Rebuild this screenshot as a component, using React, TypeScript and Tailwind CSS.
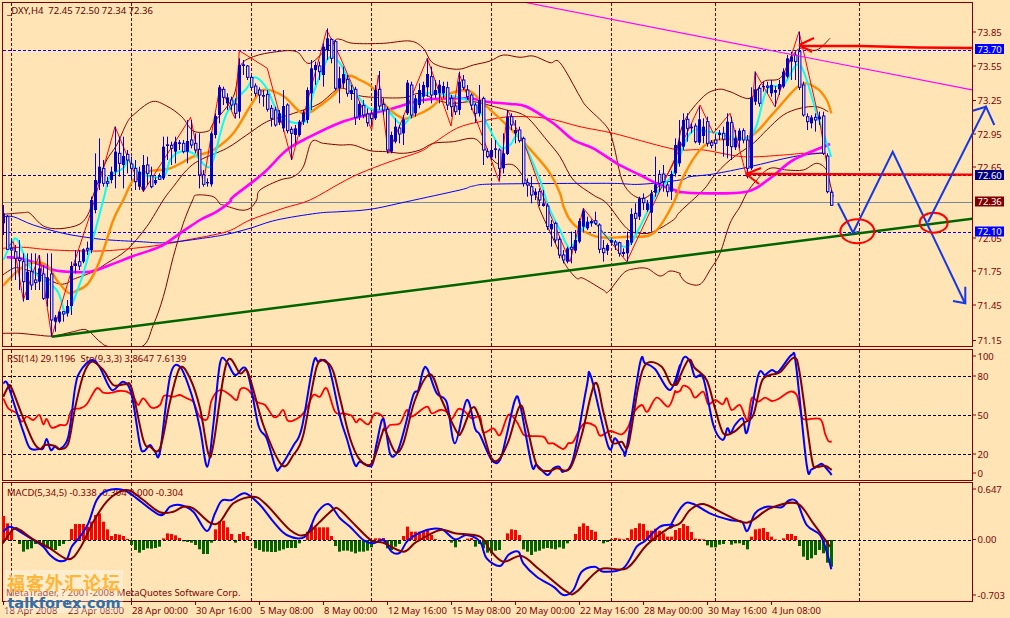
import React from "react";

type Seg = [number, number, number[]];
const MAROON = "#800000";
const BLUE = "#0000ff";
const RED = "#ff0000";

const nums = (segs: Seg[]) => {
  const out: [number, number][] = [];
  segs.forEach(([ox, oy, a]) => {
    for (let i = 0; i < a.length; i += 2) out.push([ox + a[i] / 3, oy + a[i + 1] / 3]);
  });
  return out;
};
const smoothPath = (p: [number, number][]) => {
  let d = `M${p[0][0].toFixed(1)},${p[0][1].toFixed(1)}`;
  for (let i = 0; i < p.length - 1; i++) {
    const a = p[Math.max(0, i - 1)];
    const b = p[i];
    const c = p[i + 1];
    const e = p[Math.min(p.length - 1, i + 2)];
    const c1 = [b[0] + (c[0] - a[0]) / 6, b[1] + (c[1] - a[1]) / 6];
    const c2 = [c[0] - (e[0] - b[0]) / 6, c[1] - (e[1] - b[1]) / 6];
    d += `C${c1[0].toFixed(1)},${c1[1].toFixed(1)} ${c2[0].toFixed(1)},${c2[1].toFixed(1)} ${c[0].toFixed(1)},${c[1].toFixed(1)}`;
  }
  return d;
};

const L = ({ s, c, w = 1, sharp = false }: { s: Seg[]; c: string; w?: number; sharp?: boolean }) =>
  sharp ? (
    <polyline points={nums(s).map((q) => q.map((v) => v.toFixed(1)).join(",")).join(" ")} fill="none" stroke={c} strokeWidth={w} strokeLinejoin="round" />
  ) : (
    <path d={smoothPath(nums(s))} fill="none" stroke={c} strokeWidth={w} strokeLinejoin="round" />
  );

const upper: Seg[] = [
  [0, 200, [8, 42, 20, 42, 70, 38, 90, 40, 130, 78, 180, 86, 240, 72, 268, 35, 275, 0]],
  [0, 0, [300, 530, 320, 480, 350, 435, 380, 370, 400, 345, 455, 305, 500, 318, 545, 350, 580, 393, 625, 393, 640, 370, 700, 290, 720, 200, 760, 170, 830, 155, 890, 155, 930, 190, 1000, 125]],
  [340, 0, [0, 118, 40, 130, 130, 130, 210, 123, 250, 145, 280, 190, 350, 208, 400, 195, 450, 183, 490, 165, 540, 172, 580, 168, 630, 188, 660, 188, 720, 290, 740, 320, 800, 380, 820, 430, 850, 550, 900, 595]],
  [640, 0, [45, 570, 100, 490]],
  [670, 0, [40, 370, 100, 290, 145, 268, 180, 275, 240, 295, 280, 245, 330, 235, 360, 180, 390, 145, 440, 150, 480, 115]],
];
const mid: Seg[] = [
  [0, 200, [8, 225, 40, 205, 60, 205, 110, 220, 170, 250, 200, 250, 220, 238, 280, 215, 320, 190, 380, 150, 440, 80, 490, 0]],
  [0, 0, [520, 560, 560, 510, 600, 480, 680, 445, 740, 405, 800, 365, 850, 350, 910, 330, 960, 310, 1020, 265]],
  [340, 0, [50, 285, 100, 292, 190, 293, 240, 280, 290, 300, 340, 310, 400, 305, 470, 322, 500, 330, 540, 340, 570, 360, 620, 420, 660, 470, 700, 540, 760, 585, 800, 610]],
  [340, 190, [860, 115, 900, 130, 940, 125, 1000, 90, 1020, 65]],
  [670, 0, [100, 570, 130, 530, 180, 480, 250, 430, 290, 390, 340, 345, 390, 325, 440, 320, 475, 335]],
];
const lower: Seg[] = [
  [0, 200, [8, 400, 60, 400, 110, 405, 160, 408, 220, 395, 260, 390, 300, 425, 330, 440, 425, 440, 460, 375, 490, 290, 520, 170, 550, 70, 578, 0]],
  [0, 0, [590, 585, 640, 590, 660, 612]],
  [0, 200, [670, 15, 720, 30, 750, 25, 770, 0]],
  [0, 0, [780, 570, 840, 540, 880, 530, 910, 500, 935, 425, 970, 430, 1020, 435]],
  [340, 0, [40, 435, 90, 452, 140, 455, 190, 460, 240, 450, 280, 430, 340, 425, 400, 415, 430, 440, 470, 490, 520, 495, 550, 530, 590, 590]],
  [340, 190, [600, 60, 660, 190, 680, 230, 710, 265, 730, 265, 790, 300, 805, 305, 850, 250, 880, 237, 920, 235, 960, 258, 990, 243, 1020, 250]],
  [670, 190, [30, 255, 50, 278, 90, 283, 120, 240, 150, 190, 180, 100, 210, 50]],
  [670, 0, [230, 580, 260, 540, 300, 505, 350, 510, 400, 510, 440, 490, 470, 510, 480, 550, 490, 590]],
];
const redMa: Seg[] = [
  [0, 200, [8, 145, 70, 142, 160, 150, 300, 153, 400, 145, 480, 135, 560, 120, 680, 95, 750, 60, 850, 25, 930, 0]],
  [0, 0, [1020, 550]],
  [340, 0, [60, 520, 150, 485, 240, 455, 280, 430, 350, 385, 420, 365, 510, 350, 620, 355, 720, 380, 820, 400, 950, 435, 1020, 450]],
  [670, 0, [100, 450, 220, 470, 340, 465, 400, 460, 465, 460]],
];
const blueMa: Seg[] = [
  [0, 200, [8, 50, 40, 50, 100, 75, 190, 100, 280, 115, 330, 120, 420, 125, 500, 128, 620, 113, 680, 103, 750, 85, 830, 60, 950, 40, 1020, 35]],
  [340, 190, [90, 58, 200, 35, 360, 0]],
  [340, 0, [400, 558, 470, 552, 800, 550, 900, 553, 1020, 540]],
  [670, 0, [60, 530, 130, 522, 240, 500, 370, 470, 465, 458]],
];
const magenta: Seg[] = [
  [0, 200, [20, 172, 60, 175, 110, 190, 160, 210, 200, 215, 270, 215, 330, 195, 400, 168, 480, 140, 540, 100, 600, 60, 650, 35, 690, 5]],
  [0, 0, [700, 590, 790, 520, 860, 450, 930, 410, 1020, 368]],
  [340, 0, [80, 345, 160, 325, 250, 300, 380, 295, 440, 305, 510, 312, 560, 320, 640, 370, 700, 420, 760, 445, 830, 490, 900, 525, 960, 555, 1020, 575]],
  [670, 0, [20, 575, 90, 580, 230, 575, 300, 535, 370, 480, 480, 432]],
];
const orange: Seg[] = [
  [0, 200, [8, 258, 50, 215, 90, 190, 140, 195, 170, 240, 205, 278, 230, 272, 265, 250, 300, 180, 340, 60, 370, 0]],
  [0, 0, [400, 540, 440, 515, 510, 505, 580, 470, 640, 450, 700, 400, 750, 320, 790, 270, 850, 288, 910, 340, 970, 310, 1020, 265]],
  [340, 0, [25, 228, 60, 240, 100, 265, 140, 320, 190, 355, 230, 345, 270, 325, 320, 285, 385, 272, 430, 310, 500, 375, 540, 415, 590, 470, 630, 520, 660, 580, 670, 618]],
  [340, 190, [690, 90, 720, 118, 780, 142, 860, 140, 940, 130, 1000, 40]],
  [670, 0, [40, 530, 90, 450, 140, 420, 240, 410, 310, 340, 390, 255, 440, 265, 470, 300, 484, 340]],
];
const cyan: Seg[] = [
  [0, 200, [10, 180, 45, 115, 70, 160, 100, 215, 170, 270, 200, 340, 240, 250, 270, 150, 310, 0]],
  [0, 0, [330, 530, 370, 505, 385, 480, 420, 520, 490, 530, 510, 480, 540, 455, 580, 460, 620, 500, 640, 480, 680, 340, 740, 265, 765, 232, 800, 265, 830, 330, 870, 365, 920, 360, 940, 280, 985, 175, 1020, 190]],
  [340, 0, [30, 250, 70, 310, 100, 330, 140, 330, 190, 375, 230, 310, 260, 280, 320, 285, 380, 300, 410, 320, 440, 370, 480, 440, 510, 435, 540, 410, 600, 540, 625, 618]],
  [340, 190, [660, 120, 690, 175, 720, 125, 760, 95, 800, 140, 860, 170, 900, 110, 950, 10]],
  [670, 0, [10, 520, 60, 400, 120, 395, 240, 410, 290, 270, 340, 255, 390, 195, 440, 340, 484, 470]],
];
const zigzag: Seg[] = [
  [0, 200, [18, 145, 40, 125, 70, 300, 118, 165, 155, 410, 215, 210, 275, 30]],
  [0, 0, [345, 380, 395, 500, 430, 575, 572, 352, 610, 550, 640, 370, 660, 260, 705, 355, 718, 152, 802, 205, 875, 480, 980, 90]],
  [340, 0, [0, 170, 95, 390, 115, 225, 145, 460, 262, 175, 333, 378, 357, 220, 478, 545, 503, 330, 560, 450, 620, 618]],
  [340, 190, [690, 215, 730, 55, 860, 215]],
  [670, 0, [90, 315, 130, 400, 180, 340, 230, 530, 255, 215, 315, 320, 387, 95, 450, 370, 470, 490]],
];

// candle: [bodyTop, bodyBottom, filled, wickTop?, wickBottom?] in zoomed units
type C = [number, number, number, number?, number?];
type Sec = { oy: number; x: number; d: C[] };
const secs: Sec[] = [
  { oy: 200, x: 3, d: [[40, 70, 1, 15, 105], [50, 148, 0, 45, 150], [145, 150, 0, 120, 235], [155, 175, 0, 135, 240], [175, 182, 0, 120, 270], [185, 245, 0, 160, 305], [215, 300, 1, 160, 300], [215, 255, 0, 160, 270], [240, 248, 0, 160, 270], [205, 245, 1, 165, 270], [222, 295, 0, 195, 300], [232, 295, 1, 160, 320], [222, 360, 0, 160, 410], [352, 365, 1, 345, 395], [335, 365, 1, 335, 370], [335, 342, 0, 335, 365], [318, 340, 1, 300, 350], [198, 318, 1, 185, 345], [190, 198, 1, 150, 220], [185, 198, 0, 150, 210], [148, 185, 1, 145, 190], [145, 150, 0, 125, 165], [0, 150, 1, -10, 160]] },
  { oy: 0, x: 95, d: [[540, 630, 1, 460, 640], [500, 550, 1, 415, 570], [505, 550, 0, 480, 560], [545, 550, 0, 530, 560], [515, 540, 1, 500, 550], [455, 515, 1, 380, 565], [460, 490, 0, 410, 530], [468, 495, 1, 410, 565], [463, 480, 0, 450, 520], [492, 505, 0, 470, 540], [505, 545, 0, 480, 570], [515, 560, 1, 500, 570], [495, 570, 1, 465, 575], [495, 520, 0, 470, 555], [527, 560, 0, 500, 565], [540, 550, 1, 530, 555], [530, 538, 0, 520, 540], [440, 535, 1, 410, 540], [433, 438, 1, 410, 480], [436, 445, 0, 425, 495], [425, 455, 1, 410, 490], [427, 432, 1, 420, 450], [430, 455, 0, 420, 460], [423, 455, 1, 360, 490], [420, 435, 0, 360, 445], [430, 450, 0, 400, 460], [448, 525, 0, 400, 565], [525, 553, 0, 510, 560], [546, 550, 1, 535, 560], [400, 553, 1, 395, 560], [348, 405, 1, 340, 415], [262, 345, 1, 255, 370], [268, 292, 0, 260, 315], [292, 310, 1, 280, 330], [300, 315, 0, 290, 330], [312, 340, 0, 295, 355], [195, 335, 1, 175, 355], [193, 198, 1, 180, 225], [198, 232, 0, 195, 240], [232, 262, 0, 225, 270], [258, 280, 0, 250, 290], [270, 285, 0, 262, 310], [285, 290, 1, 270, 320], [283, 328, 0, 270, 335], [325, 355, 0, 315, 380], [330, 375, 0, 320, 380], [340, 368, 1, 330, 375], [318, 385, 1, 270, 395], [315, 392, 0, 310, 400], [388, 400, 0, 380, 480], [385, 405, 1, 375, 430], [365, 405, 1, 360, 410], [338, 365, 1, 330, 375], [270, 360, 1, 262, 370], [205, 280, 1, 180, 330], [195, 210, 1, 185, 255], [198, 215, 0, 185, 240], [140, 225, 1, 130, 260], [115, 150, 1, 85, 180], [118, 175, 0, 115, 190], [125, 265, 0, 120, 270], [235, 265, 1, 200, 310]] },
  { oy: 0, x: 343, d: [[222, 250, 1, 200, 265], [238, 280, 0, 225, 290], [270, 282, 1, 255, 300], [268, 352, 0, 260, 375], [312, 350, 1, 305, 360], [316, 345, 0, 300, 355], [342, 368, 0, 325, 380], [342, 356, 0, 330, 380], [270, 355, 1, 255, 360], [268, 318, 0, 213, 330], [313, 330, 0, 295, 345], [328, 450, 0, 320, 460], [405, 455, 1, 395, 460], [380, 425, 1, 355, 430], [384, 402, 0, 375, 430], [358, 400, 1, 345, 435], [248, 340, 1, 240, 345], [255, 345, 0, 245, 355], [295, 340, 1, 285, 350], [270, 315, 1, 250, 325], [255, 290, 1, 245, 310], [222, 262, 1, 175, 290], [230, 285, 0, 200, 310], [270, 285, 1, 240, 295], [254, 280, 1, 240, 310], [258, 280, 1, 245, 295], [263, 315, 0, 245, 330], [295, 320, 0, 285, 350], [318, 335, 0, 305, 345], [245, 330, 1, 215, 345], [240, 262, 0, 225, 270], [270, 290, 0, 255, 300], [285, 315, 0, 280, 330], [315, 340, 0, 308, 368], [300, 340, 1, 255, 350], [295, 450, 0, 290, 495], [455, 470, 0, 445, 475], [450, 472, 1, 420, 480], [445, 450, 1, 420, 475], [450, 505, 0, 445, 540], [460, 505, 1, 400, 520], [350, 462, 1, 330, 465], [350, 375, 0, 340, 390], [390, 400, 1, 360, 430], [390, 422, 0, 380, 428], [415, 550, 0, 410, 560], [548, 555, 0, 535, 590], [560, 585, 0, 530, 610], [575, 585, 1, 565, 600], [575, 600, 0, 565, 618]] },
  { oy: 190, x: 543, d: [[40, 48, 1, 0, 50], [48, 110, 0, 40, 120], [102, 118, 1, 90, 170], [100, 150, 0, 95, 160], [148, 195, 0, 140, 205], [195, 210, 0, 180, 220], [175, 215, 1, 170, 220], [172, 178, 0, 125, 220], [150, 182, 1, 120, 190], [93, 155, 1, 85, 160], [62, 110, 1, 55, 125], [95, 115, 1, 80, 120], [93, 100, 1, 88, 110], [92, 100, 0, 65, 105], [105, 178, 0, 100, 190], [175, 188, 0, 150, 215], [165, 182, 1, 160, 195], [150, 158, 1, 145, 165], [156, 165, 0, 150, 180], [158, 190, 0, 155, 200], [186, 192, 1, 175, 200], [150, 190, 1, 125, 215], [72, 158, 1, 55, 165], [70, 85, 0, 40, 130], [25, 80, 1, 20, 90], [25, 38, 0, 10, 60], [40, 60, 1, 30, 65], [10, 68, 1, 0, 125]] },
  { oy: 0, x: 655, d: [[553, 578, 1, 470, 590], [523, 550, 0, 510, 575], [522, 545, 0, 495, 575], [555, 575, 0, 545, 590], [522, 575, 1, 512, 600], [435, 520, 1, 415, 530], [425, 490, 1, 360, 500], [360, 440, 1, 340, 450], [358, 385, 0, 340, 425], [380, 385, 1, 370, 400], [378, 425, 0, 370, 430], [358, 428, 1, 320, 435], [380, 408, 1, 355, 430], [365, 430, 0, 350, 440], [428, 436, 0, 420, 445], [420, 430, 0, 405, 445], [398, 405, 1, 390, 420], [400, 418, 0, 380, 470], [365, 438, 1, 340, 475], [368, 440, 0, 350, 480], [415, 442, 1, 390, 450], [392, 422, 1, 385, 445], [392, 420, 0, 385, 430], [420, 505, 0, 405, 535], [292, 505, 1, 262, 510], [268, 305, 1, 215, 315], [265, 310, 0, 255, 320], [258, 262, 1, 245, 275], [258, 262, 0, 245, 280], [255, 280, 1, 240, 290], [270, 278, 1, 258, 320], [252, 268, 1, 240, 285], [215, 260, 1, 205, 265], [175, 230, 1, 165, 235], [170, 185, 1, 155, 240], [165, 185, 0, 155, 240], [155, 262, 0, 95, 270], [255, 345, 0, 245, 350], [350, 365, 0, 340, 390], [352, 370, 1, 345, 385], [352, 360, 0, 340, 395], [350, 358, 1, 335, 375], [348, 460, 0, 335, 465], [468, 575, 0, 460, 580], [577, 616, 0, 570, 618]] },
];

const Candles = () => {
  const out: React.ReactNode[] = [];
  secs.forEach((s, si) =>
    s.d.forEach((c, i) => {
      const x = s.x + i * 4;
      const t = s.oy + c[0] / 3;
      const b = s.oy + c[1] / 3;
      const wt = s.oy + (c[3] ?? c[0]) / 3;
      const wb = s.oy + (c[4] ?? c[1]) / 3;
      out.push(
        <g key={`${si}-${i}`}>
          <line x1={x + 0.5} x2={x + 0.5} y1={wt} y2={wb} stroke="#0000d0" />
          {c[2] ? (
            <rect x={x - 1} y={t} width={3} height={Math.max(1, b - t)} fill="#0000d0" />
          ) : (
            <rect x={x - 0.5} y={t} width={2.4} height={Math.max(1, b - t)} fill="#ffe4b5" stroke="#0000d0" />
          )}
        </g>
      );
    })
  );
  return <>{out}</>;
};

const VGrid = ({ y1, y2 }: { y1: number; y2: number }) => (
  <>
    {[11.5, 131.5, 251.5, 371.5, 491.5, 611.5, 715.5, 859.5].map((x) => (
      <line key={x} x1={x} x2={x} y1={y1} y2={y2} stroke={MAROON} strokeDasharray="3 2" />
    ))}
  </>
);
const HDash = ({ y, c }: { y: number; c: string }) => <line x1={3} x2={972} y1={y} y2={y} stroke={c} strokeDasharray="3 2" />;

const Tick = ({ y, t, c = MAROON }: { y: number; t: string; c?: string }) => (
  <>
    <line x1={972} x2={976} y1={y} y2={y} stroke={MAROON} />
    <text x={977.5} y={y + 3.5} fill={c}>{t}</text>
  </>
);
const Badge = ({ y, t, bg }: { y: number; t: string; bg: string }) => (
  <>
    <rect x={975} y={y - 5} width={29} height={10} fill={bg} />
    <text x={977.5} y={y + 3.5} fill="#fff">{t}</text>
  </>
);

const stochRed: Seg[] = [
  [0, 345, [10, 160, 25, 190, 50, 205, 65, 230, 80, 215, 100, 225, 118, 210, 130, 238, 140, 222, 155, 248, 180, 240, 200, 238, 215, 195, 240, 190, 260, 178, 290, 130, 310, 143, 335, 143, 355, 138, 380, 140, 400, 155, 415, 180, 430, 160, 455, 188, 480, 180, 492, 152, 520, 155, 540, 150, 560, 160, 580, 170, 597, 212, 622, 222, 635, 165, 660, 135, 690, 150, 710, 165, 722, 132, 745, 135, 770, 170, 795, 180, 820, 215, 835, 212, 850, 195, 865, 228, 900, 215, 920, 190, 940, 150, 960, 155, 980, 130, 1005, 200]],
  [340, 345, [10, 205, 35, 212, 48, 232, 60, 222, 85, 238, 105, 205, 130, 218, 135, 255, 150, 240, 180, 235, 200, 195, 215, 215, 260, 185, 275, 205, 300, 195, 320, 200, 335, 222, 355, 192, 375, 200, 395, 220, 420, 215, 430, 262, 460, 250, 480, 270, 505, 210, 530, 230, 550, 268, 570, 273, 610, 275, 625, 295, 640, 295, 670, 312, 685, 295, 700, 290, 730, 238, 765, 243, 780, 272, 810, 258, 845, 268, 865, 245, 880, 205, 905, 180, 922, 200, 950, 158, 985, 185, 1005, 140]],
  [670, 345, [15, 142, 30, 138, 40, 122, 60, 132, 75, 158, 100, 140, 115, 178, 135, 165, 158, 178, 170, 160, 185, 195, 210, 180, 232, 225, 245, 160, 265, 170, 285, 158, 305, 168, 325, 162, 360, 140, 380, 150, 390, 190, 400, 222, 450, 222, 465, 265, 475, 288, 485, 290]],
];
const stochBlue: Seg[] = [
  [0, 345, [10, 115, 22, 115, 45, 185, 70, 260, 90, 310, 120, 312, 130, 310, 140, 282, 152, 315, 165, 305, 180, 312, 205, 275, 225, 130, 240, 80, 275, 45, 300, 68, 335, 135, 370, 110, 395, 150, 420, 300, 432, 318, 450, 300, 465, 320, 480, 320, 510, 95, 540, 65, 575, 150, 600, 250, 622, 365, 640, 240, 660, 55, 680, 50, 705, 90, 740, 75, 775, 240, 800, 280, 827, 368, 840, 368, 880, 302, 905, 250, 940, 55, 955, 50, 985, 60, 1020, 215]],
  [340, 345, [20, 280, 45, 360, 60, 350, 95, 362, 110, 295, 130, 222, 150, 325, 170, 325, 190, 265, 220, 150, 235, 135, 250, 75, 262, 72, 290, 145, 320, 172, 345, 295, 380, 165, 405, 250, 420, 270, 455, 345, 480, 345, 500, 270, 525, 165, 540, 178, 575, 360, 590, 360, 622, 390, 640, 370, 658, 365, 670, 380, 700, 340, 740, 125, 753, 95, 805, 305, 825, 280, 850, 318, 860, 310, 900, 55, 915, 55, 945, 72, 990, 135, 1020, 60]],
  [670, 345, [15, 120, 40, 40, 60, 50, 75, 95, 100, 100, 130, 240, 158, 285, 172, 250, 182, 265, 195, 240, 218, 220, 232, 260, 265, 90, 285, 90, 305, 75, 325, 80, 365, 30, 378, 60, 410, 360, 425, 373, 450, 358, 460, 360, 485, 390]],
];
const stochMaroon: Seg[] = [
  [0, 345, [10, 155, 25, 125, 35, 130, 70, 220, 100, 290, 120, 312, 135, 300, 165, 303, 180, 312, 205, 295, 225, 190, 250, 90, 275, 50, 310, 75, 340, 120, 375, 118, 395, 130, 430, 285, 450, 305, 480, 310, 510, 170, 540, 68, 570, 100, 600, 190, 625, 325, 640, 300, 680, 52, 720, 85, 745, 85, 790, 240, 845, 360, 880, 330, 910, 270, 950, 65, 980, 52, 1000, 80, 1020, 160]],
  [340, 345, [30, 280, 60, 345, 95, 355, 125, 270, 135, 255, 165, 320, 190, 295, 225, 165, 270, 88, 305, 165, 350, 260, 365, 260, 395, 190, 415, 210, 450, 330, 475, 345, 505, 290, 540, 182, 560, 240, 590, 360, 625, 378, 650, 370, 690, 370, 725, 270, 765, 115, 790, 200, 815, 290, 845, 290, 865, 300, 895, 125, 920, 55, 965, 65, 995, 120, 1020, 100]],
  [670, 345, [20, 118, 55, 45, 75, 70, 110, 105, 135, 190, 160, 265, 190, 262, 210, 245, 225, 232, 250, 210, 275, 110, 300, 90, 330, 82, 372, 38, 390, 90, 425, 340, 440, 365, 465, 362, 485, 375]],
];
const macdBlue: Seg[] = [
  [0, 480, [10, 155, 30, 140, 60, 155, 100, 180, 130, 200, 150, 225, 175, 242, 200, 238, 215, 200, 240, 170, 265, 130, 290, 60, 320, 32, 370, 30, 410, 55, 480, 105, 510, 80, 540, 75, 580, 95, 620, 153, 645, 100, 665, 62, 695, 60, 735, 40, 780, 75, 820, 125, 860, 165, 915, 170, 950, 100, 985, 72]],
  [340, 480, [0, 115, 30, 140, 70, 180, 100, 190, 130, 180, 155, 215, 180, 218, 205, 180, 260, 150, 305, 148, 345, 178, 380, 165, 420, 185, 440, 235, 480, 258, 505, 225, 535, 215, 550, 250, 590, 290, 640, 320, 670, 345, 700, 330, 725, 275, 765, 260, 790, 275, 850, 265, 890, 200, 915, 183, 960, 140, 1000, 135]],
  [670, 480, [0, 140, 40, 75, 70, 72, 120, 100, 180, 120, 215, 125, 232, 153, 255, 100, 290, 80, 335, 82, 355, 62, 380, 65, 410, 135, 450, 165, 470, 215, 484, 268]],
];
const macdMaroon: Seg[] = [
  [0, 480, [8, 190, 40, 148, 60, 150, 100, 178, 150, 205, 205, 238, 240, 205, 280, 125, 320, 65, 360, 35, 390, 32, 430, 60, 480, 97, 520, 95, 550, 80, 580, 85, 630, 128, 660, 125, 700, 70, 760, 50, 800, 75, 870, 150, 915, 165, 960, 125, 1000, 88]],
  [340, 480, [0, 90, 50, 140, 95, 182, 130, 188, 190, 215, 230, 185, 300, 150, 345, 160, 420, 170, 450, 210, 490, 245, 545, 228, 600, 270, 680, 335, 710, 335, 780, 268, 860, 265, 920, 195, 985, 145, 1020, 130]],
  [670, 480, [60, 90, 100, 72, 160, 100, 230, 128, 300, 85, 380, 70, 430, 130, 480, 200]],
];

const hist: { x: number; d: number[] }[] = [
  { x: 3, d: [72, 50, 28, 0, -12, -35, -28, -25, -12, -12, -20, -25, -28, -30, -18, -12, -2, 33, 48, 48, 48, 40, 55, 75, 80, 55, 32, 12, 18, 16, 12, 3, -15, -30, -38, -30, -25, -26, -24, -20, 5, 20, 18, 14, 6, -4, -6, -8, -15, -28, -42, -42, -8, 32, 55, 58, 38, 18, -8, 18, 24, 12, 0, -25, -30, -35, -35, -36, -36, -32, -28, -24, -24, -24, -10, 0, 25, 45, 38, 38, 38, 38, 12, -18, -35] },
  { x: 343, d: [-32, -32, -35, -40, -35, -35, -32, -22, 5, 5, 6, -25, -30, -20, -12, 12, 40, 25, 25, 25, 25, 32, 15, 3, 0, 0, 0, -8, -22, -5, 0, 4, 6, -20, -12, -25, -38, -40, -32, -30, 0, 20, 32, 30, 15, -28, -35, -45, -35, -32, -26, -24, -26, -28, -22, -26, -10, 0, 18, 40, 50, 42, 30, 25, 0, -10, -6, 3, 6, 4, 2, 6, 32, 36, 50, 48, 28, 28, 34, 28, 20, 10] },
  { x: 671, d: [10, 30, 36, 48, 42, 24, 4, 3, 2, -16, -22, -22, -14, -12, 0, -14, -10, -10, -15, -28, 10, 32, 34, 36, 24, 10, 2, 0, 5, 18, 18, 12, -18, -50, -60, -55, -45, -30, -40, -68, -80] },
];

const Arrow = ({ x, y, a, b }: { x: number; y: number; a: number[]; b: number[] }) => (
  <>
    <line x1={x} y1={y} x2={a[0]} y2={a[1]} stroke={RED} strokeWidth={2} />
    <line x1={x} y1={y} x2={b[0]} y2={b[1]} stroke={RED} strokeWidth={2} />
  </>
);

const times = ["18 Apr 2008", "23 Apr 08:00", "28 Apr 00:00", "30 Apr 16:00", "5 May 08:00", "8 May 00:00", "12 May 16:00", "15 May 08:00", "20 May 00:00", "22 May 16:00", "28 May 00:00", "30 May 16:00", "4 Jun 08:00"];

export default function App() {
  return (
    <div className="relative w-[1010px] h-[618px] overflow-hidden bg-[#ffe4b5] pt-[2px] pl-[2px] font-['Noto_Sans',sans-serif] text-[9.5px] text-[#800000]">
      {/* price pane */}
      <div className="w-[971px] h-[345px] border border-[#800000]">
        <svg className="block overflow-visible" width={969} height={343} viewBox="3 3 969 343">
          <defs>
            <clipPath id="c1"><rect x={3} y={3} width={969} height={343} /></clipPath>
          </defs>
          <text x={7} y={13.5} fill="#600000" xmlSpace="preserve">_DXY,H4  72.45 72.50 72.34 72.36</text>
          <g clipPath="url(#c1)">
            <VGrid y1={3} y2={346} />
            <HDash y={50.5} c={BLUE} />
            <HDash y={175.5} c="#000080" />
            <line x1={3} x2={972} y1={202.5} y2={202.5} stroke="#778899" />
            <HDash y={232.5} c={BLUE} />
            <L s={upper} c={MAROON} />
            <L s={mid} c={MAROON} />
            <L s={lower} c={MAROON} />
            <L s={redMa} c={RED} />
            <L s={blueMa} c={BLUE} />
            <L s={magenta} c="#ff00ff" w={2.6} />
            <L s={orange} c="#ff8c00" w={2.4} />
            <L s={cyan} c="#00ffff" w={2} />
            <L s={zigzag} c={RED} sharp />
            <Candles />
            <line x1={526.7} y1={2.7} x2={972.7} y2={90} stroke="#ff00ff" strokeWidth={1.2} />
            <line x1={51.7} y1={336.7} x2={972.7} y2={218.7} stroke="#006400" strokeWidth={2.6} />
            <polyline points="800,46 861,46 918,47.5 972,48" fill="none" stroke={RED} strokeWidth={2.4} />
            <Arrow x={799} y={45} a={[814, 38]} b={[812, 52]} />
            <line x1={746} y1={174} x2={972} y2={174.6} stroke={RED} strokeWidth={2.4} />
            <Arrow x={746} y={174} a={[761, 168]} b={[759, 184]} />
            <polyline points="838,203.3 853,232.7 892.7,151.7 965,303.3" fill="none" stroke="#1438e8" strokeWidth={2} />
            <polyline points="853,232.7 860,231" fill="none" stroke="#1438e8" strokeWidth={1} />
            <ellipse cx={857.3} cy={231.3} rx={17} ry={12} fill="none" stroke={RED} strokeWidth={2} />
            <ellipse cx={933.7} cy={222.7} rx={14} ry={10} fill="none" stroke={RED} strokeWidth={2} />
          </g>
          <polyline points="928,222 986,106.7 994.3,125" fill="none" stroke="#1438e8" strokeWidth={2} />
          <polyline points="972.7,110.7 986,106.7" fill="none" stroke="#1438e8" strokeWidth={2} />
          <polyline points="965.3,286.7 965.3,303.3 953,301" fill="none" stroke="#1438e8" strokeWidth={2} />
          <Tick y={32} t="73.85" />
          <Tick y={66} t="73.55" />
          <Tick y={100.5} t="73.25" />
          <Tick y={134} t="72.95" />
          <Tick y={167} t="72.65" />
          <Tick y={238} t="72.05" />
          <Tick y={271} t="71.75" />
          <Tick y={305} t="71.45" />
          <Tick y={340.5} t="71.15" />
          <Badge y={49} t="73.70" bg="#0000ff" />
          <Badge y={175} t="72.60" bg="#000080" />
          <Badge y={201.5} t="72.36" bg="#800000" />
          <Badge y={231.5} t="72.10" bg="#0000ff" />
        </svg>
      </div>
      {/* RSI pane */}
      <div className="w-[971px] h-[132px] mt-[2px] border border-[#800000]">
        <svg className="block overflow-visible" width={969} height={130} viewBox="3 350 969 130">
          <text x={7} y={362} fill={MAROON} xmlSpace="preserve">RSI(14) 29.1196  Sto(9,3,3) 3.8647 7.6139</text>
          <VGrid y1={350} y2={480} />
          <HDash y={376.5} c="#000" />
          <HDash y={415.5} c="#000" />
          <HDash y={454.5} c="#000" />
          <L s={stochRed} c={RED} w={1.8} />
          <L s={stochBlue} c={BLUE} w={2} />
          <L s={stochMaroon} c={MAROON} w={2} />
          <Tick y={356} t="100" />
          <Tick y={376} t="80" />
          <Tick y={415} t="50" />
          <Tick y={454} t="20" />
          <Tick y={473} t="0" />
        </svg>
      </div>
      {/* MACD pane */}
      <div className="w-[971px] h-[120px] mt-px border border-[#800000]">
        <svg className="block overflow-visible" width={969} height={118} viewBox="3 483 969 118">
          <text x={7} y={496} fill={MAROON}>MACD(5,34,5) -0.338 -0.304 0.000 -0.304</text>
          <text x={6} y={596} fill={MAROON}>MetaTrader, ? 2001-2008 MetaQuotes Software Corp.</text>
          <VGrid y1={483} y2={601} />
          {hist.map((h) =>
            h.d.map((v, i) => (
              <rect key={`${h.x}-${i}`} x={h.x - 1 + i * 4} y={v > 0 ? 540 - v / 3 : 540} width={3} height={Math.abs(v) / 3} fill={v > 0 ? RED : "#006400"} />
            ))
          )}
          <HDash y={540.5} c="#000" />
          <L s={macdBlue} c={BLUE} w={2} />
          <L s={macdMaroon} c={MAROON} w={2} />
          <Tick y={489} t="0.647" />
          <Tick y={539.5} t="0.00" />
          <Tick y={595} t="-0.703" />
        </svg>
      </div>
      {/* time axis */}
      <div className="flex pl-px">
        {times.map((t) => (
          <div key={t} className="w-[64px] shrink-0 flex flex-col items-start whitespace-nowrap">
            <span className="w-px h-[3px] bg-[#800000]" />
            <span className="pl-px leading-[11px]">{t}</span>
          </div>
        ))}
      </div>
      {/* watermark */}
      <div className="absolute left-[5px] top-[570px] w-[118px] h-[43px] bg-[#ffffff55] flex flex-col items-center">
        <span className="font-['Noto_Sans_CJK_SC',sans-serif] font-bold text-[18px] leading-[25px] tracking-[1px] text-[#ffb638]">福客外汇论坛</span>
        <span className="font-['DejaVu_Sans',sans-serif] font-bold text-[14.5px] leading-[16px] text-[#2f6ea8]">talkforex.com</span>
      </div>
    </div>
  );
}
